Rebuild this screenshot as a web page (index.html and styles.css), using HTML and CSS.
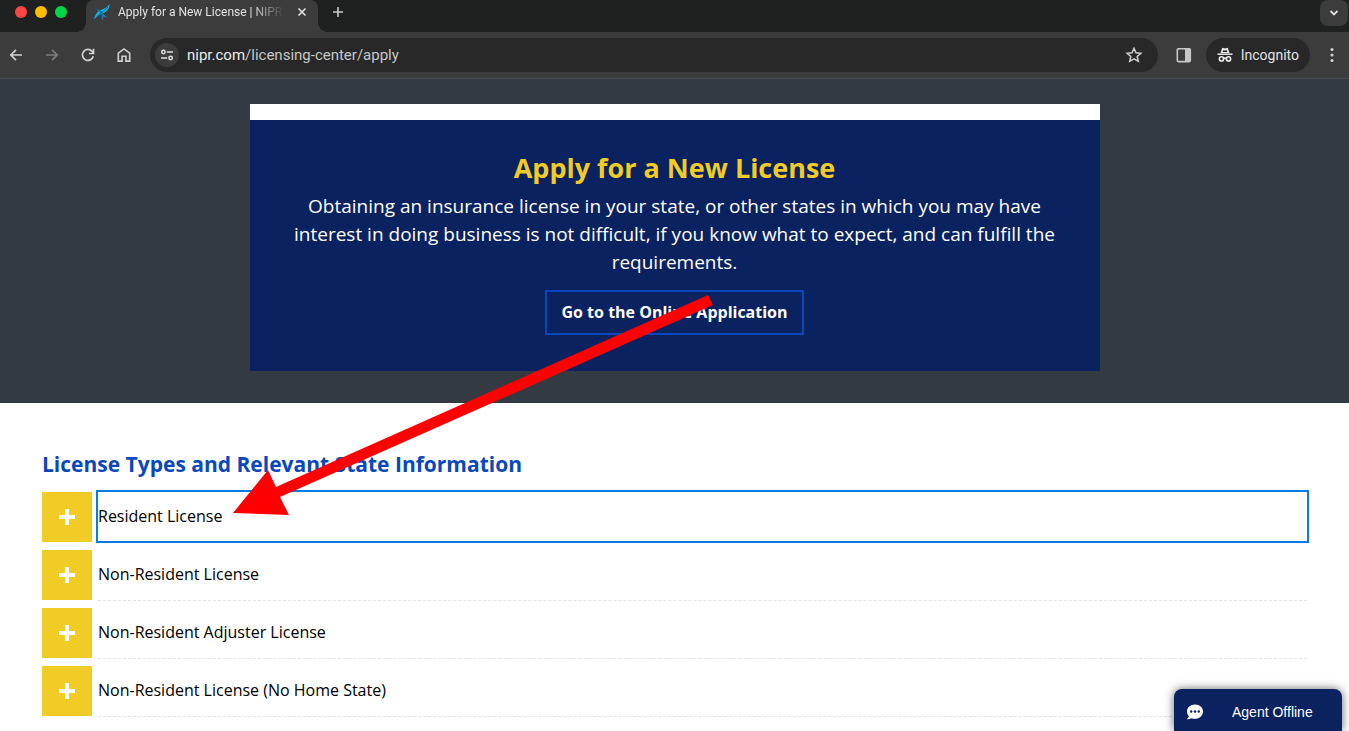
FILE: index.html
```html
<!DOCTYPE html>
<html lang="en">
<head>
<meta charset="utf-8">
<meta name="viewport" content="width=device-width, initial-scale=1">
<title>Apply for a New License | NIPR</title>
<link rel="stylesheet" href="styles.css">
</head>
<body>
<div class="browser">
  <header class="chrome">
    <div class="tabstrip">
      <div class="lights"><span class="light red"></span><span class="light amber"></span><span class="light green"></span></div>
      <div class="tab">
        <svg class="favicon" viewBox="0 0 18 18" width="18" height="18" aria-hidden="true">
          <path d="M1 16.500C2 12 4 8.500 8 7C11 5.500 14 5 16.500 1C16.500 6 14 8 11.500 9.500C8 11 5 12 1 16.500Z" fill="#16b5e8"/>
          <path d="M2 6C5 6 8 7 10 10C12 12.500 13 14 15.500 14.500C12 15 9.500 13.500 8 11C6 8 4.500 7 2 6Z" fill="#1479bd"/>
          <path d="M4 13.500C6 10 10 9.500 15 4" fill="none" stroke="#13679b" stroke-width="1"/>
          <path d="M9 11.500C8.500 13 8.500 15 9.500 17.500C10 15 11 13 11 12Z" fill="#1479bd"/>
        </svg>
        <span class="tab-title">Apply for a New License | NIPR</span>
        <button class="icon-button" aria-label="Close tab"><svg width="12" height="12" viewBox="0 0 12 12"><path d="M2.500 2.500l7 7M9.500 2.500l-7 7" stroke="#e3e3e3" stroke-width="1.600"/></svg></button>
      </div>
      <button class="icon-button new-tab" aria-label="New tab"><svg width="12" height="12" viewBox="0 0 12 12"><path d="M6 1v10M1 6h10" stroke="#c9c9c9" stroke-width="1.600"/></svg></button>
      <button class="icon-button tab-search" aria-label="Search tabs"><svg width="10" height="8" viewBox="0 0 10 8"><path d="M1.500 2l3.500 3.500L8.500 2" fill="none" stroke="#e3e3e3" stroke-width="1.800"/></svg></button>
    </div>
    <div class="toolbar">
      <nav class="nav-buttons" aria-label="Browser navigation">
        <button class="icon-button" aria-label="Back"><svg width="16" height="16" viewBox="0 0 16 16"><path d="M14 8H3M8 2.800L2.800 8L8 13.200" fill="none" stroke="#d0d0d0" stroke-width="1.700"/></svg></button>
        <button class="icon-button" aria-label="Forward"><svg width="16" height="16" viewBox="0 0 16 16"><path d="M2 8h11M8 2.800L13.200 8L8 13.200" fill="none" stroke="#7d7d7d" stroke-width="1.700"/></svg></button>
        <button class="icon-button" aria-label="Reload"><svg width="16" height="16" viewBox="0 0 16 16"><path d="M13.300 9.200A5.500 5.500 0 1 1 12 4.200L13.300 5.700" fill="none" stroke="#d0d0d0" stroke-width="1.700"/><path d="M13.500 1.800v4.700H8.900" fill="none" stroke="#d0d0d0" stroke-width="1.700"/></svg></button>
        <button class="icon-button" aria-label="Home"><svg width="16" height="16" viewBox="0 0 16 16"><path d="M2.300 6.200L8 1.900l5.700 4.300v7.900H9.900V9.200H6.100v4.900H2.300z" fill="none" stroke="#d0d0d0" stroke-width="1.600"/></svg></button>
      </nav>
      <div class="omnibox">
        <button class="icon-button site-info" aria-label="View site information"><svg width="14" height="14" viewBox="0 0 14 14"><g fill="none" stroke="#e0e0e0" stroke-width="1.500"><circle cx="3.400" cy="4" r="1.700"/><path d="M6.800 4H13M1 10h6.200"/><circle cx="10.600" cy="10" r="1.700"/></g></svg></button>
        <a class="address" href="#"><span class="host">nipr.com</span>/licensing-center/apply</a>
        <button class="icon-button" aria-label="Bookmark this tab"><svg width="18" height="18" viewBox="0 0 18 18"><path d="M9 2.300l2 4.500 4.900.5-3.700 3.200 1.100 4.800L9 12.800l-4.300 2.500 1.100-4.800-3.700-3.200 4.900-.5z" fill="none" stroke="#d0d0d0" stroke-width="1.500"/></svg></button>
      </div>
      <button class="icon-button side-panel" aria-label="Side panel"><svg width="16" height="16" viewBox="0 0 16 16"><rect x="1.300" y="1.800" width="13" height="12.800" rx="1" fill="none" stroke="#c7c7c7" stroke-width="1.600"/><path d="M9 2h5.500v12.500H9z" fill="#c7c7c7"/></svg></button>
      <button class="incognito"><svg width="16" height="16" viewBox="0 0 16 16" aria-hidden="true"><path d="M3.500 6L5 1.400C5.200.8 5.600.7 6.100.9L8 1.500l1.900-.6c.5-.2.900-.1 1.100.5L12.500 6z" fill="#ececec"/><path d="M6.200 3.200L5.600 5h4.800l-.6-1.800L8 3.600z" fill="#282828"/><path d="M.5 7.200h15" stroke="#ececec" stroke-width="1.500"/><g fill="none" stroke="#ececec" stroke-width="1.600"><circle cx="4.500" cy="11.900" r="2.100"/><circle cx="11.500" cy="11.900" r="2.100"/><path d="M6.600 11.500q1.400-.9 2.800 0"/></g></svg>Incognito</button>
      <button class="icon-button menu" aria-label="Browser menu"><svg width="4" height="16" viewBox="0 0 4 16"><g fill="#d0d0d0"><circle cx="2" cy="2.500" r="1.600"/><circle cx="2" cy="8" r="1.600"/><circle cx="2" cy="13.500" r="1.600"/></g></svg></button>
    </div>
  </header>

  <main>
    <section class="hero">
      <div class="hero-card">
        <h1>Apply for a New License</h1>
        <p>Obtaining an insurance license in your state, or other states in which you may have interest in doing business is not difficult, if you know what to expect, and can fulfill the requirements.</p>
        <a class="cta" href="#">Go to the Online Application</a>
      </div>
    </section>
    <section class="types">
      <h2>License Types and Relevant State Information</h2>
      <ul class="accordion">
        <li><button class="row focused"><span class="plus"></span><span class="label">Resident License</span></button></li>
        <li><button class="row"><span class="plus"></span><span class="label">Non-Resident License</span></button></li>
        <li><button class="row"><span class="plus"></span><span class="label">Non-Resident Adjuster License</span></button></li>
        <li><button class="row"><span class="plus"></span><span class="label">Non-Resident License (No Home State)</span></button></li>
      </ul>
    </section>
  </main>

  <svg class="arrow" width="480" height="222" viewBox="0 0 480 222" aria-hidden="true"><path d="M0 219L35 176L43 193L475 1L480 11L47 203L56 221Z" fill="#f00"/></svg>
  <button class="chat"><svg width="18" height="16" viewBox="0 0 18 16" aria-hidden="true"><path d="M9 .5C4.300.5 1 3.500 1 7.500c0 2 .8 3.700 2.100 4.900L.8 15.200c2 .2 3.500-.2 4.700-1 1 .4 2.200.6 3.500.6 4.700 0 8-3.200 8-7.300S13.700.5 9 .5z" fill="#fff"/><g fill="#0a2463"><circle cx="5.200" cy="7.500" r="1.200"/><circle cx="9" cy="7.500" r="1.200"/><circle cx="12.800" cy="7.500" r="1.200"/></g></svg><span>Agent Offline</span></button>
</div>
</body>
</html>
```
FILE: styles.css
```css
* { box-sizing: border-box; }
body { margin: 0; background: #fff; color: #000; font-family: "Open Sans", sans-serif; }
button { margin: 0; padding: 0; border: 0; background: none; color: inherit; font: inherit; }
a { color: inherit; text-decoration: none; }
svg { display: block; flex: none; }

.browser { position: relative; height: 100vh; overflow: hidden; }
.chrome { color: #e3e3e3; font-family: Roboto, sans-serif; }

.tabstrip { display: flex; height: 32px; background: #1f2120; }
.lights { display: flex; gap: 8px; padding: 6px 0 0 15px; width: 86px; flex: none; }
.light { width: 12px; height: 12px; border-radius: 50%; }
.red { background: #ff4644; }
.amber { background: #ffbd00; }
.green { background: #00d748; }
.tab { position: relative; display: flex; align-items: center; width: 232px; padding: 0 10px 8px 7px; background: #3c3c3c; border-radius: 8px 8px 0 0; }
.tab::before, .tab::after { content: ""; position: absolute; bottom: 0; width: 10px; height: 10px; }
.tab::before { right: 100%; background: radial-gradient(circle at 0 0, #1f2120 10px, #3c3c3c 10px); }
.tab::after { left: 100%; background: radial-gradient(circle at 100% 0, #1f2120 10px, #3c3c3c 10px); }
.tab-title { flex: 1; margin: 0 12px 0 7px; overflow: hidden; white-space: nowrap; font-size: 12px; line-height: 16px; -webkit-mask-image: linear-gradient(to right, #000 80%, transparent); mask-image: linear-gradient(to right, #000 80%, transparent); }
.icon-button { display: flex; align-items: center; justify-content: center; flex: none; }
.new-tab { height: 24px; margin-left: 14px; }
.tab-search { width: 28px; height: 26px; margin-left: auto; margin-right: 1px; border-radius: 8px; background: #3c3c3c; }

.toolbar { display: flex; align-items: center; height: 47px; padding: 0 15px 0 8px; background: #3c3c3c; border-bottom: 1px solid #4a4a4a; }
.nav-buttons { display: flex; gap: 20px; }
.omnibox { display: flex; flex: 1; align-items: center; height: 34px; margin-left: 18px; padding: 0 15px 0 5px; border-radius: 17px; background: #282828; }
.site-info { width: 24px; height: 24px; border-radius: 50%; background: #3c3c3c; }
.address { flex: 1; margin-left: 8px; color: #c7c7c7; font-size: 15px; line-height: 20px; }
.host { color: #ececec; }
.side-panel { margin: 0 14px 0 18px; }
.incognito { display: flex; align-items: center; gap: 8px; height: 34px; padding: 0 11px; border-radius: 17px; background: #282828; font-size: 14px; }
.menu { margin-left: 20px; }

.hero { padding: 25px 24px 32px; background: #343a41; }
.hero-card { max-width: 850px; margin: 0 auto; padding: 32px 32px 36px; border-top: 16px solid #fff; background: #0a2260; color: #fff; text-align: center; }
.hero-card h1 { margin: 0; color: #f1cb26; font-size: 27px; line-height: 32px; font-weight: 700; }
.hero-card p { margin: 8px 0 14px; font-size: 19px; line-height: 28px; }
.cta { display: inline-block; padding: 8px 14px; border: 2px solid #0948bb; font-size: 16px; line-height: 25px; font-weight: 700; vertical-align: top; }

.types { padding: 46px 42px; }
.types h2 { margin: 0; color: #0948bb; font-size: 21px; line-height: 30px; font-weight: 700; }
.accordion { display: flex; flex-direction: column; gap: 8px; margin: 13px 0 0; padding: 0; list-style: none; }
.row { display: flex; width: 100%; gap: 6px; font-size: 16px; text-align: left; }
.plus { width: 50px; height: 50px; flex: none; background: linear-gradient(#fff, #fff) center / 16px 4px no-repeat, linear-gradient(#fff, #fff) center / 4px 16px no-repeat, #f1cb26; }
.label { flex: 1; height: 51px; margin-bottom: -1px; border-bottom: 1px dashed #e4e4e8; line-height: 48px; }
.focused .label { height: 49px; border-color: transparent; outline: 2px solid #0a7be4; }

.arrow { position: absolute; left: 233px; top: 294px; pointer-events: none; }
.chat { position: absolute; right: 7px; bottom: 0; display: flex; align-items: center; gap: 28px; width: 168px; height: 42px; padding: 4px 12px 0; border-radius: 8px 8px 0 0; background: #0a2260; box-shadow: 0 0 10px rgba(0, 0, 0, .6); color: #fff; font: 14px/20px "Liberation Sans", Arial, sans-serif; }
```
